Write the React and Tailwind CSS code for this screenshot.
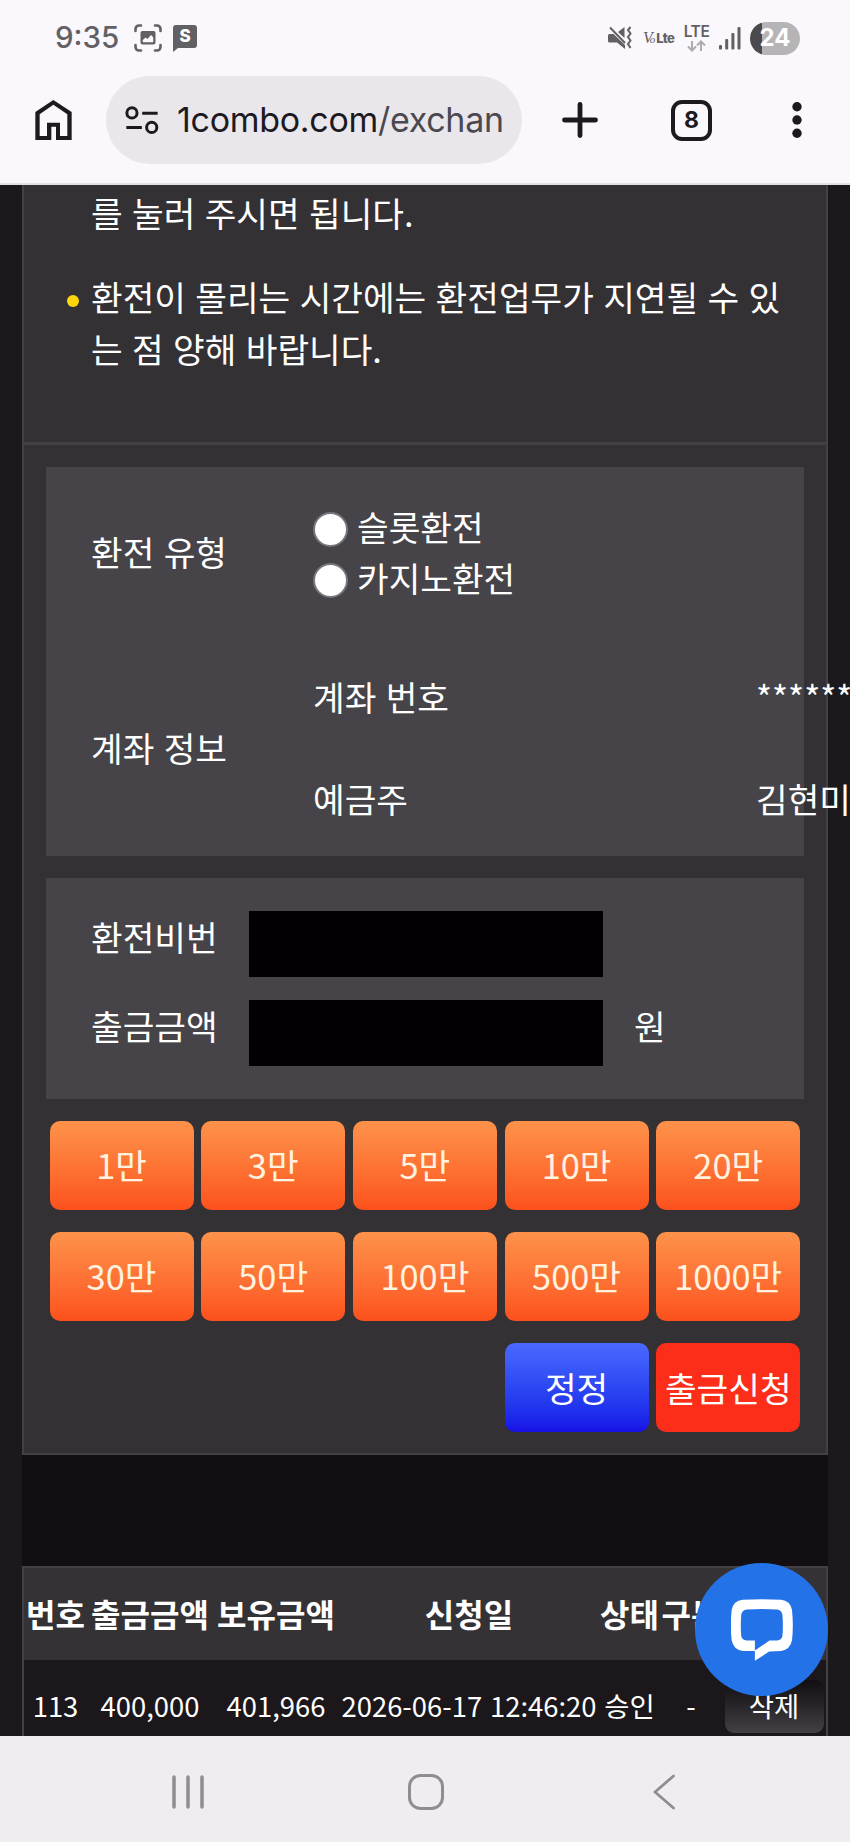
import React, { useState } from 'react';

const AMOUNTS = ['1만', '3만', '5만', '10만', '20만', '30만', '50만', '100만', '500만', '1000만'];
const HEADERS = ['번호', '출금금액', '보유금액', '신청일', '상태', '구분', ''];
const ROWS = [
  { no: '113', amount: '400,000', balance: '401,966', date: '2026-06-17 12:46:20', status: '승인', type: '-' },
];

function StatusBar() {
  return (
    <div className="flex h-[76px] items-center pl-[55px] pr-[50px] font-['Inter',sans-serif] text-[#626064]">
      <span className="w-[79px] text-[29.5px] font-medium leading-none">9:35</span>
      <svg width="28" height="28" viewBox="0 0 28 28" fill="none" stroke="currentColor" strokeWidth="2.6" strokeLinecap="round">
        <path d="M1.5 7V5a3.5 3.5 0 0 1 3.5-3.5h2M21 1.5h2A3.5 3.5 0 0 1 26.500 5v2M26.500 21v2a3.500 3.500 0 0 1-3.500 3.500h-2M7 26.500H5A3.500 3.500 0 0 1 1.500 23v-2" />
        <path fillRule="evenodd" fill="currentColor" stroke="none" d="M8.500 7h11a2 2 0 0 1 2 2v9.500a2 2 0 0 1-2 2h-11a2 2 0 0 1-2-2V9a2 2 0 0 1 2-2zM8.800 18.300h10.400v-5l-2.200-2.300-3.500 4-2-1.600-2.700 2.500z" />
      </svg>
      <div className="relative ml-[11px] flex h-[28px] w-[24px] justify-center">
        <svg className="absolute inset-0" width="24" height="28" viewBox="0 0 24 28" fill="currentColor">
          <path d="M3 1h18a3 3 0 0 1 3 3v17a3 3 0 0 1-3 3H5l-5 4V4a3 3 0 0 1 3-3z" />
        </svg>
        <span className="relative pt-[4px] text-[17px] font-extrabold leading-[17px] text-white">S</span>
      </div>

      <div className="ml-auto flex items-center">
        <svg width="24" height="24" viewBox="0 0 24 24" fill="currentColor">
          <path d="M0 9.500a1.500 1.500 0 0 1 1.500-1.500h4L17 19v4L9 16.500H1.500A1.500 1.500 0 0 1 0 15zM10 6l6.500-5v11z" />
          <path d="M2 1.500l15 15.500" fill="none" stroke="currentColor" strokeWidth="2" />
          <path d="M22.500 1l-2.500 3 2.500 3.500-2.500 3.500 2.500 3.500-2.500 3.500 2.500 4" fill="none" stroke="currentColor" strokeWidth="2" />
        </svg>
        <div className="ml-[11px] flex w-[33px] items-baseline whitespace-nowrap">
          <span className="font-['Liberation_Serif',serif] text-[16px] italic leading-none tracking-[-4px]">V</span>
          <span className="ml-[1px] font-['Liberation_Serif',serif] text-[11px] italic leading-none">o</span>
          <span className="ml-[1px] text-[13px] font-extrabold leading-none tracking-[-0.6px]">Lte</span>
        </div>
        <div className="ml-[7px] flex w-[27px] flex-col items-center">
          <span className="text-[15.5px] font-semibold leading-[14px] tracking-[-0.4px]">LTE</span>
          <svg className="mt-[1px]" width="19" height="12" viewBox="0 0 19 12" fill="none" stroke="#adabae" strokeWidth="2">
            <path d="M5 1v9M1 6.500L5 10.500l4-4M14 11V2M10 5.500l4-4 4 4" />
          </svg>
        </div>
        <svg className="ml-[9px]" width="22" height="24" viewBox="0 0 22 24" fill="currentColor">
          <rect x="0" y="19" width="3" height="4.500" rx="1" />
          <rect x="6.200" y="13" width="3" height="10.500" rx="1" />
          <rect x="12.400" y="7" width="3" height="16.500" rx="1" />
          <rect x="18.500" y="1" width="3" height="22.500" rx="1" />
        </svg>
        <div className="ml-[9px] flex h-[33px] w-[50px] items-center justify-center rounded-full bg-[linear-gradient(90deg,#4b494c_0_12px,#b6b4b7_12px)] text-[24px] font-bold leading-none text-white">
          24
        </div>
      </div>
    </div>
  );
}

function BrowserBar() {
  return (
    <div className="flex h-[88px] items-center pl-[35px] text-[#1c1a1f]">
      <svg width="37" height="40" viewBox="106 302 109 120" fill="currentColor" fillRule="evenodd">
        <path d="M106 422V338L160 302 215 338V422H168V382H154V422zM119 410H141V370H180V410H202V345L160 316 119 345z" />
      </svg>
      <div className="ml-[34px] flex h-[88px] w-[416px] items-center rounded-full bg-[#e9e7ec] pl-[19px]">
        <svg width="34" height="29" viewBox="374 318 103 88" fill="none" stroke="currentColor" strokeWidth="9">
          <circle cx="395" cy="339" r="15.500" />
          <circle cx="455" cy="383" r="15.500" />
          <path d="M426 340h47M378 383h47" />
        </svg>
        <span className="ml-[18px] whitespace-nowrap font-['Inter',sans-serif] text-[34px] leading-none tracking-[-0.3px]">
          1combo.com<span className="text-[#4b494f]">/exchan</span>
        </span>
      </div>
      <svg className="ml-[40px]" width="36" height="36" viewBox="0 0 36 36" stroke="currentColor" strokeWidth="4.800" strokeLinecap="round">
        <path d="M18 2.500v31M2.500 18h31" />
      </svg>
      <div className="ml-[73px] flex h-[41px] w-[41px] items-center justify-center rounded-[11px] border-[4.500px] border-[#1c1a1f] font-['Inter',sans-serif] text-[23px] font-bold leading-none">
        8
      </div>
      <svg className="ml-[80px]" width="10" height="36" viewBox="0 0 10 36" fill="currentColor">
        <circle cx="5" cy="4.700" r="4.700" />
        <circle cx="5" cy="18" r="4.700" />
        <circle cx="5" cy="31.300" r="4.700" />
      </svg>
    </div>
  );
}

function Radio({ label, checked, onChange }) {
  return (
    <label className="flex h-[51px] items-center">
      <input type="radio" name="type" checked={checked} onChange={onChange} className="mt-[5px] h-[35px] w-[35px] appearance-none rounded-full border-2 border-[#77757a] bg-white" />
      <span className="ml-[9px]">{label}</span>
    </label>
  );
}

function NavBar() {
  return (
    <div className="flex h-[106px] shrink-0 items-center bg-[#f0edf1] pb-[-1px] text-[#8f8d91]">
      <svg className="ml-[171px] mt-[5px]" width="34" height="34" viewBox="0 0 34 34" stroke="currentColor" strokeWidth="3.500" strokeLinecap="round">
        <path d="M3 2v30M17 2v30M31 2v30" />
      </svg>
      <svg className="ml-[203px] mt-[5px]" width="36" height="36" viewBox="0 0 36 36" fill="none" stroke="currentColor" strokeWidth="3">
        <rect x="1.500" y="1.500" width="33" height="33" rx="11" />
      </svg>
      <svg className="ml-[209px] mt-[5px]" width="23" height="36" viewBox="0 0 23 36" fill="none" stroke="currentColor" strokeWidth="2.800" strokeLinecap="round" strokeLinejoin="round">
        <path d="M20.500 2L2 18l18.500 16" />
      </svg>
    </div>
  );
}

export default function App() {
  const [type, setType] = useState('');
  const [password, setPassword] = useState('');
  const [amount, setAmount] = useState('');

  return (
    <div className="relative flex h-[1842px] w-[850px] flex-col overflow-hidden bg-[#1b191c] font-['Noto_Sans_CJK_KR',sans-serif] text-[34.400px] leading-[51.300px] text-white [word-spacing:1.700px]">
      <header className="h-[185px] shrink-0 border-b-2 border-[#e2e0e4] bg-[#faf8fd]">
        <StatusBar />
        <BrowserBar />
      </header>

      <main className="h-[1551px] shrink-0 overflow-hidden px-[22px]">
        <section className="h-[1270px] border-x-2 border-b-2 border-[#434145] bg-[#343135]">
          {/* Notice */}
          <div className="h-[260px] border-b-[3px] border-[#434145] pl-[67px] pt-[2px]">
            <p>를 눌러 주시면 됩니다.</p>
            <div className="mt-[33px] flex">
              <span className="-ml-[24px] mr-[12px] mt-[24px] h-[12px] w-[12px] shrink-0 rounded-full bg-[#ffd60a]" />
              <p>환전이 몰리는 시간에는 환전업무가 지연될 수 있<br />는 점 양해 바랍니다.</p>
            </div>
          </div>

          {/* Account */}
          <div className="mx-[22px] mt-[22px] grid h-[389px] grid-cols-[222px_1fr] content-start bg-[#464448] pl-[45px] pt-[34px] whitespace-nowrap">
            <div className="flex items-center">환전 유형</div>
            <div>
              <Radio label="슬롯환전" checked={type === 'slot'} onChange={() => setType('slot')} />
              <Radio label="카지노환전" checked={type === 'casino'} onChange={() => setType('casino')} />
            </div>
            <div className="mt-[42px] flex items-center">계좌 정보</div>
            <div className="mt-[42px] grid grid-cols-[443px_130px]">
              <span className="py-[25.500px]">계좌 번호</span>
              <span className="py-[25.500px]">*************</span>
              <span className="py-[25.500px]">예금주</span>
              <span className="py-[25.500px]">김현미</span>
            </div>
          </div>

          <div className="mx-[22px] mt-[22px] flex h-[221px] flex-col gap-[23px] bg-[#464448] pl-[45px] pt-[33px]">
            <div className="flex">
              <label className="w-[158px]">환전비번</label>
              <input type="password" value={password} onChange={e => setPassword(e.target.value)} className="h-[66px] w-[354px] bg-[#020005] px-4 outline-none" />
            </div>
            <div className="flex">
              <label className="w-[158px]">출금금액</label>
              <input value={amount} onChange={e => setAmount(e.target.value)} className="h-[66px] w-[354px] bg-[#020005] px-4 outline-none" />
              <span className="ml-[31px]">원</span>
            </div>
          </div>

          <div className="ml-[25.500px] mt-[22px] grid grid-cols-[repeat(5,144px)] gap-x-[7.700px] gap-y-[22px]">
            {AMOUNTS.map(a => (
              <button key={a} onClick={() => setAmount(a)} className="h-[89px] rounded-[10px] bg-linear-to-b from-[#fd924a] to-[#fc501c] pb-[1px] text-[#fff3e0]">{a}</button>
            ))}
            <button onClick={() => setAmount('')} className="col-start-4 h-[89px] rounded-[10px] bg-linear-to-b from-[#4a69ff] to-[#180ee6]">정정</button>
            <button className="h-[89px] whitespace-nowrap rounded-[10px] bg-[#fc2e1a]">출금신청</button>
          </div>
        </section>

        <div className="h-[111px] bg-[#120e11]" />

        {/* History */}
        <section className="border-x-2 border-t-2 border-[#434145] bg-[#1b171a]">
          <div className="grid h-[92px] grid-cols-[63px_126px_126px_260px_61px_62px_104px] items-center whitespace-nowrap bg-[#353236] text-center text-[32px] font-bold">
            {HEADERS.map((h, i) => <span key={i}>{h}</span>)}
          </div>
          {ROWS.map(r => (
            <div key={r.no} className="grid h-[92px] grid-cols-[63px_126px_126px_260px_61px_62px_104px] items-center whitespace-nowrap text-center text-[27.400px]">
              <span>{r.no}</span>
              <span>{r.amount}</span>
              <span>{r.balance}</span>
              <span>{r.date}</span>
              <span>{r.status}</span>
              <span>{r.type}</span>
              <button className="mx-auto h-[53px] w-[99px] rounded-[9px] bg-linear-to-b from-[#120f13] to-[#434145] leading-none">삭제</button>
            </div>
          ))}
        </section>
      </main>

      <NavBar />

      <button className="absolute left-[695px] top-[1563px] flex h-[133px] w-[133px] items-center justify-center rounded-full bg-[#2472e8]">
        <svg width="62" height="62" viewBox="915 182 187 186" fill="#fff" fillRule="evenodd">
          <path d="M950 184Q1008 180 1066 184Q1094 187 1099 215Q1104 262 1099 306Q1094 334 1066 338L1030 340 987 368V338L950 338Q922 334 917 306Q912 262 917 215Q922 187 950 184zM962 213Q1008 210 1054 213Q1067 215 1070 228Q1073 262 1070 294Q1067 305 1054 307L1031 307 987 337V307L962 307Q949 305 946 294Q943 262 946 228Q949 215 962 213z" />
        </svg>
      </button>
    </div>
  );
}
